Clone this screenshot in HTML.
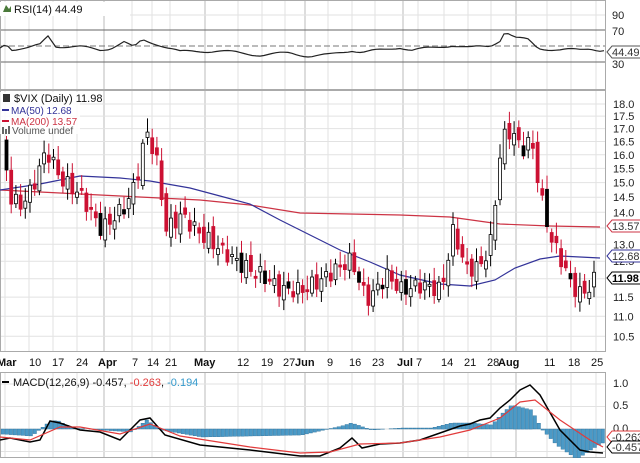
<!DOCTYPE html><html><head><style>
body{margin:0;background:#fff;width:640px;height:458px;overflow:hidden;font-family:"Liberation Sans",sans-serif}
svg text{font-family:"Liberation Sans",sans-serif}
#w{position:absolute;left:0;top:0;width:640px;height:458px}
</style></head><body>
<div id="w"></div>
<script>
(function(){
var h='';
function L(x1,y1,x2,y2,c,w,d){h+='<line x1="'+x1+'" y1="'+y1+'" x2="'+x2+'" y2="'+y2+'" stroke="'+c+'" stroke-width="'+(w||1)+'"'+(d?' stroke-dasharray="'+d+'"':'')+'/>';}
function T(x,y,t,c,sz,extra){h+='<text x="'+x+'" y="'+y+'" fill="'+(c||'#000')+'" font-size="'+(sz||11)+'" '+(extra||'')+'>'+t+'</text>';}
function P(pts,c,w){var a=[];for(var i=0;i<pts.length;i++)a.push(pts[i][0]+','+pts[i][1]);h+='<polyline fill="none" stroke="'+c+'" stroke-width="'+(w||1)+'" points="'+a.join(' ')+'"/>';}
function interp(k,x){for(var i=0;i<k.length-1;i++){if(x>=k[i][0]&&x<=k[i+1][0]){var t=(x-k[i][0])/(k[i+1][0]-k[i][0]);return k[i][1]+t*(k[i+1][1]-k[i][1]);}}return k[k.length-1][1];}
try{
var PW=605;
var panels=[[0,90],[90,352],[372,458]];
var weeks=[5,29,53,77,104,132,152,170,205,238,262,285,305,328,352,375,403,418,444,468,491,516,547,571,596];
var months=[104,205,305,403,516];
for(var pi=0;pi<panels.length;pi++){var p=panels[pi];for(var wi=0;wi<weeks.length;wi++){var x=weeks[wi];L(x,p[0],x,p[1],months.indexOf(x)>=0?'#bbb':'#e2e2e2');}}
function py(v){return 104+431*Math.log(18/v);}
for(var v=10.5;v<=18.01;v+=0.5){var y=py(v);L(0,y.toFixed(1),PW,y.toFixed(1),'#e2e2e2');T(613,(y+4).toFixed(1),v.toFixed(1),'#222',11);}
L(0,15,PW,15,'#e2e2e2');
L(0,30,PW,30,'#666');L(0,62,PW,62,'#666');L(0,46,PW,46,'#777',1,'6,3');
T(612,19,'90','#222',11);T(612,35,'70','#222',11);T(612,68,'30','#222',11);
function my(v){return 429-v*45;}
L(0,my(1),PW,my(1),'#e2e2e2');L(0,my(0.5),PW,my(0.5),'#e2e2e2');L(0,my(0),PW,my(0),'#e2e2e2');L(0,my(-0.5),PW,my(-0.5),'#e2e2e2');
T(613,387,'1.0','#222',11);T(613,409,'0.5','#222',11);T(613,432,'0.0','#222',11);
for(var pi=0;pi<panels.length;pi++){var p=panels[pi];h+='<rect x="0.5" y="'+(p[0]+0.5)+'" width="'+PW+'" height="'+(p[1]-p[0]-1)+'" fill="none" stroke="#aaa"/>';}
var rk=[[0,48],[6,43],[12,49],[30,48],[40,45],[48,36],[56,46],[80,47],[100,50],[110,48],[124,42],[134,48],[142,40],[158,44],[180,52],[200,51],[218,51],[240,53],[262,55],[290,53],[310,56],[330,55],[352,50],[362,52],[385,50],[400,47],[412,50],[434,48],[452,45],[470,48],[480,47],[490,46],[500,40],[505,31],[515,38],[528,40],[538,48],[560,50],[580,50],[590,48],[600,50]];
var rp=[];for(var x=0;x<=PW;x+=4){rp.push([x,(interp(rk,x)+Math.sin(x*1.7)*1.5).toFixed(1)]);}
P(rp,'#222',1.2);
P([[0,190],[100,195],[200,200],[250,205],[300,213],[350,214],[400,215],[450,217],[500,224],[550,226],[600,227]],'#cc3344',1.2);
P([[0,190],[40,184],[80,176],[120,178],[150,181],[190,188],[220,196],[250,204],[280,220],[310,235],[340,250],[370,262],[400,275],[440,284],[470,286],[495,280],[515,268],[540,259],[560,256],[600,258]],'#333399',1.2);
var ck=[[0,140],[10,200],[20,205],[30,190],[45,150],[60,180],[80,195],[100,230],[115,215],[125,205],[135,180],[145,130],[155,160],[165,230],[180,215],[200,235],[220,250],[240,265],[260,275],[280,290],[300,290],[320,280],[340,265],[350,260],[365,300],[375,290],[385,275],[400,290],[420,285],[440,290],[452,230],[465,270],[480,265],[490,240],[500,140],[510,130],[520,150],[530,140],[540,200],[550,240],[560,260],[570,285],[580,295],[590,285],[598,270]];
var prev=interp(ck,0);
for(var i=0;i<126;i++){var x=5+i*4.7;var c=interp(ck,x)+Math.sin(i*2.3)*8;var o=prev+Math.sin(i*3.1)*6;
 var up=c<o;var tp=Math.min(o,c),bt=Math.max(o,c);if(bt-tp<2)bt=tp+2;
 var wt=tp-4-Math.abs(Math.sin(i*1.3))*10,wb=bt+3+Math.abs(Math.cos(i*0.7))*8;
 var col=up?'#000':'#cc1133';
 L((x+1.5).toFixed(1),wt.toFixed(1),(x+1.5).toFixed(1),wb.toFixed(1),col);
 var fill=up?'#fff':'#cc1133'; if(!up&&i%5==0)fill='#000';
 h+='<rect x="'+x.toFixed(1)+'" y="'+tp.toFixed(1)+'" width="3" height="'+(bt-tp).toFixed(1)+'" fill="'+fill+'" stroke="'+(fill=='#000'?'#000':col)+'" stroke-width="0.8"/>';
 prev=c;}
var bk=[[0,434],[30,436],[45,424],[55,420],[70,428],[100,430],[130,432],[145,420],[160,430],[200,437],[300,435],[340,426],[350,423],[370,430],[400,428],[430,428],[450,423],[470,423],[490,425],[500,414],[510,405],[530,410],[540,429],[555,445],[575,459],[600,443]];
for(var x=1;x<PW;x+=4){var y=interp(bk,x);h+='<rect x="'+x+'" y="'+Math.min(y,429).toFixed(1)+'" width="3.5" height="'+Math.abs(y-429).toFixed(1)+'" fill="#4b9ac7" stroke="#2a6f99" stroke-width="0.4"/>';}
P([[0,440],[10,438],[30,442],[40,440],[50,421],[60,423],[80,430],[100,432],[120,440],[140,420],[150,418],[165,435],[200,445],[250,450],[300,456],[320,456],[340,448],[352,438],[362,448],[380,444],[400,443],[420,440],[440,433],[460,426],[470,424],[480,420],[490,418],[500,408],[510,400],[520,390],[530,385],[540,395],[560,430],[580,450],[590,452],[603,453]],'#000',1.5);
P([[0,437],[30,440],[60,427],[80,427],[120,434],[150,424],[180,436],[250,447],[300,453],[330,452],[360,444],[400,443],[440,437],[470,430],[500,418],[520,402],[535,400],[560,420],[590,440],[603,447]],'#e23b3b',1.2);
var dl=[[0,'Mar',1],[29,'10'],[52,'17'],[76,'24'],[98,'Apr',1],[132,'7'],[147,'14'],[165,'21'],[194,'May',1],[237,'12'],[261,'19'],[283,'27'],[295,'Jun',1],[327,'9'],[349,'16'],[372,'23'],[397,'Jul',1],[416,'7'],[441,'14'],[464,'21'],[487,'28'],[498,'Aug',1],[544,'11'],[568,'18'],[591,'25']];
for(var di=0;di<dl.length;di++){var d=dl[di];T(d[0]==0?-3:d[0],366,d[1],'#111',11,d[2]?'font-weight="bold"':'');}
function box(y,t,c,b){h+='<path d="M607 '+y+' l5 -6 h30 v12 h-30 z" fill="#fff" stroke="'+c+'"/>';T(612,y+4,t,b?'#000':'#333',11,b?'font-weight="bold"':'');}
box(52,'44.49','#555');box(226,'13.57','#cc3344');box(256,'12.68','#333399');box(278,'11.98','#000',1);box(437,'-0.263','#e23b3b');box(447,'-0.457','#000');
h+='<rect x="0" y="2" width="130" height="14" fill="#fff"/>';
T(14,13,'RSI(14) 44.49','#111',11);h+='<path d="M3 12 l3 -7 l3 4 l2 -3 v6 z" fill="#4a7a3a"/>';
h+='<rect x="0" y="92" width="80" height="42" fill="#fff" opacity="0.85"/>';
T(14,102,'$VIX (Daily) 11.98','#111',11);h+='<rect x="3" y="94" width="7" height="8" fill="#333"/>';
L(2,110,9,110,'#333399',2);T(11,114,'MA(50) 12.68','#333399',10);
L(2,121,9,121,'#cc1133',2);T(11,125,'MA(200) 13.57','#cc3344',10);
h+='<rect x="2" y="127" width="2" height="7" fill="#666"/><rect x="5" y="129" width="2" height="5" fill="#666"/><rect x="8" y="126" width="2" height="8" fill="#666"/>';
T(12,134,'Volume undef','#555',10);
L(2,382,9,382,'#000',2);T(13,386,'MACD(12,26,9) -0.457, <tspan fill="#e23b3b">-0.263</tspan>, <tspan fill="#3399cc">-0.194</tspan>','#111',11);
}catch(e){}
document.getElementById('w').innerHTML='<svg width="640" height="458" viewBox="0 0 640 458">'+h+'</svg>';
})();
</script></body></html>
